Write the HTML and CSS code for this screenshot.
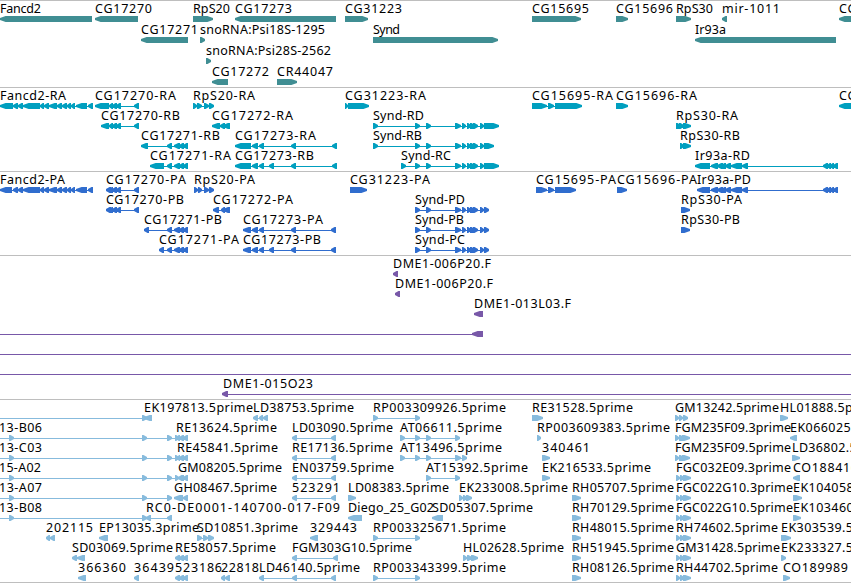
FILE: index.html
```html
<!DOCTYPE html>
<html lang="en">
<head>
    <meta charset="UTF-8">
    <meta name="viewport" content="width=device-width, initial-scale=1.0">
    <title>Genome Tracks</title>
    <link rel="stylesheet" href="styles.css">
</head>
<body>
    <main class="tracks">
        <section class="track genes" id="genes"></section>
        <section class="track transcripts" id="transcripts"></section>
        <section class="track proteins" id="proteins"></section>
        <section class="track clones" id="clones"></section>
        <section class="track ests" id="ests"></section>
    </main>
    <script src="script.js"></script>
</body>
</html>
```

FILE: styles.css
```css
body {
    margin: 0;
    background-color: #ffffff;
    font-family: "Noto Sans", "DejaVu Sans", sans-serif;
    font-size: 12.5px;
    overflow: hidden;
}

.tracks {
    display: flex;
    flex-direction: column;
    width: 851px;
    border-bottom: 1px solid #bebebe;
}

.track {
    box-sizing: border-box;
    border-top: 1px solid #bebebe;
    padding-bottom: 3px;
}

.row {
    display: block;
    width: 851px;
    height: 20px;
    overflow: visible;
}

.label {
    fill: #000000;
}

/* The gene rows are one pixel taller than the others */
.genes .row {
    height: 21px;
}

.genes,
.ests {
    padding-bottom: 2px;
}

.genes {
    color: #408e93;
}

.transcripts {
    color: #009fbf;
}

.proteins {
    color: #306dce;
}

.clones {
    color: #7858a8;
}

.ests {
    color: #87bbdd;
}

.feature {
    fill: currentColor;
}
```

FILE: script.js
```js
// One string per row. Features are separated by ";" and written as
// label | label width | strand | blocks (start-end) | label x (optional)
const fancd2 = '13:18 18:23 23:40 40:44 44:49 49:57 57:62 62:67 67:71 71:75 76:87 88:93';
const synd = '415:420 426:431 455:461 462:466 467:471 470:475 473:478 480:484';
const ir93a = '711:718 717:723 721:726 725:731 731:742 742:748 823:828 827:831 830:834 833:838';
const cg71 = '167:172 174:180 179:184 183:188';
const cg70 = '109:113 112:117 116:121 134:139';
const rps30 = '676:680 680:684 683:691';

const tracks = {
    genes: [
        'Fancd2|41|<|0:92;CG17270|57|<|95:138;RpS20|37|>|193:213;CG17273|57|<|235:336;CG31223|57|>|345:368;CG15695|57|>|532:581;CG15696|57|>|616:628;RpS30|37|>|676:691;mir-1011|58|<|722:727;CG17278|57|<|839:890',
        'CG17271|57|<|141:188;snoRNA:Psi18S-1295|125|>|200:205;Synd|27|>|373:498;Ir93a|31|<|695:836',
        'snoRNA:Psi28S-2562|125|>|206:211',
        'CG17272|57|<|212:228;CR44047|56|>|277:297'
    ],
    transcripts: [
        `Fancd2-RA|66|<|0:13 ${fancd2};CG17270-RA|81|<|95:109 ${cg70};RpS20-RA|62|>|193:197 197:202 204:209 209:214;CG31223-RA|81|>|345:348 348:369;CG15695-RA|81|>|532:547 548:554 555:582;CG15696-RA|81|>|616:628;CG17278-RA|81|<|839:890`,
        `CG17270-RB|79|<|101:109 ${cg70};CG17272-RA|81|<|212:220 220:225 223:230;Synd-RD|51|>|373:378 ${synd} 484:499;RpS30-RA|62|>|676:681 679:684 683:691`,
        `CG17271-RB|79|<|141:148 ${cg71};CG17273-RA|81|<|235:251 252:258 259:264 291:296 332:337;Synd-RB|49|>|373:378 ${synd} 484:494;RpS30-RB|60|>|680:684 683:691`,
        `CG17271-RA|81|<|150:164 ${cg71};CG17273-RB|79|<|235:251 252:258 259:264 269:274 291:296 332:337;Synd-RC|50|>|401:406 ${synd} 484:499;Ir93a-RD|55|<|695:710 ${ir93a}`
    ],
    proteins: [
        `Fancd2-PA|65|<|0:12 ${fancd2};CG17270-PA|80|<|106:111 ${cg70};RpS20-PA|61|>|194:198 198:202 204:209 209:214;CG31223-PA|80|>|350:367;CG15695-PA|80|>|536:547 548:554 555:576;CG15696-PA|80|>|617:627;Ir93a-PD|54|<|697:710 ${ir93a}`,
        `CG17270-PB|78|<|106:111 ${cg70};CG17272-PA|80|<|213:219 221:225 223:230;Synd-PD|50|>|${synd} 484:489;RpS30-PA|61|>|681:690`,
        `CG17271-PB|78|<|144:149 ${cg71};CG17273-PA|80|<|243:251 252:258 259:264 291:296 331:336;Synd-PB|49|>|${synd} 484:489;RpS30-PB|59|>|681:690`,
        `CG17271-PA|80|<|159:164 ${cg71};CG17273-PB|78|<|243:251 252:258 259:264 269:274 291:296 331:336;Synd-PC|50|>|${synd} 484:489`
    ],
    clones: [
        'DME1-006P20.F|98|<|393:398',
        'DME1-006P20.F|98|<|395:400',
        'DME1-013L03.F|97|<|474:483',
        '||<|-40:-30 472:483',
        '||<|-40:-30 890:900',
        '||<|-40:-30 890:900',
        'DME1-015O23|90|<|222:228 890:900|223'
    ],
    ests: [
        '||>|-40:-30 142:147;EK197813.5prime|109|<|144:152;LD38753.5prime|101|<|253:258 259:263 263:268;RP003309926.5prime|133|>|373:378 415:420;RE31528.5prime|101|>|532:543;GM13242.5prime|104|>|675:679 679:683 683:688;HL01888.5prime|101|>|780:788',
        '13-B06|43|>|-40:-30 9:14 142:147 167:172 175:179|-1;RE13624.5prime|101|<|176:180 179:184 183:188;LD03090.5prime|101|<|292:297 331:336;AT06611.5prime|102|>|400:405 415:420 426:431 455:460;RP003609383.5prime|133|>|537:541;FGM235F09.3prime|116|>|675:679 679:684 682:690;EK066025.5prime|109|<|790:797',
        '13-C03|43|>|-40:-30 9:14 142:147 167:172 175:179|-1;RE45841.5prime|101|<|177:180 179:184 183:188;RE17136.5prime|101|<|292:297 331:336;AT13496.5prime|102|>|400:405 415:420 426:431 455:461 462:467;340461|48|>|542:550;FGM235F09.5prime|116|>|675:679 679:684 682:690;LD36802.5prime|101|>|792:800',
        '15-A02|42|>|-40:-30 9:14 142:147 167:172 175:179|-1;GM08205.5prime|104|<|178:183 179:184 183:188;EN03759.5prime|102|<|292:297 331:336;AT15392.5prime|102|>|426:431 455:460;EK216533.5prime|109|>|542:550;FGC032E09.3prime|115|>|' + rps30 + ';CO188416|65|<|793:800',
        '13-A07|43|>|-40:-30 9:14 142:147 167:172|-1;GH08467.5prime|103|<|174:183 183:188;523291|48|<|292:297 331:336;LD08383.5prime|101|>|348:356;EK233008.5prime|109|>|459:463 463:467 466:472;RH05707.5prime|102|>|572:581;FGC022G10.3prime|117|>|' + rps30 + ';EK104058.5prime|109|>|793:802',
        '13-B08|43|>|-40:-30 9:14 142:147|-1;RC0-DE0001-140700-017-F09|194|<|146:151 167:172;Diego_25_G02|86|<|348:362;SD05307.5prime|101|<|432:443;RH70129.5prime|102|>|572:581;FGC022G10.5prime|117|>|' + rps30 + ';EK103460.5prime|109|>|793:801',
        '202115|47|<|46:50 50:55;EP13035.3prime|100|<|99:108;SD10851.3prime|101|>|197:202 203:208 208:214;329443|47|<|310:318;RP003325671.5prime|133|>|373:378 415:420;RH48015.5prime|102|>|572:581;RH74602.5prime|102|>|' + rps30 + ';EK303539.5prime|109|>|781:791',
        'SD03069.5prime|101|<|72:77 77:85;RE58057.5prime|101|<|175:180 179:184 183:188;FGM303G10.5prime|120|<|292:297 333:338;HL02628.5prime|101|>|463:467 467:472 471:478;RH51945.5prime|102|>|572:581;GM31428.5prime|104|>|' + rps30 + ';EK233327.5prime|109|>|781:786',
        '366360|48|<|78:86;36439|40|<|134:139;523186|47|<|175:180 179:184 183:188;22818|38|<|221:225 225:230;LD46140.5prime|101|<|259:264 292:297 331:336;RP003343399.5prime|133|>|373:378 415:420;RH08126.5prime|102|>|572:581;RH44702.5prime|102|>|' + rps30 + ';CO189989|65|>|783:790'
    ]
};

const MIDDLE = 18;
const BASELINE = 12;

// A box with a blunt pointed end; short boxes are only the point
function block(start, end, strand) {
    const size = end - start;
    const head = size > 6 ? Math.min(size, 8) : size;
    const tip = strand === '<' ? start : end;
    const neck = strand === '<' ? start + head : end - head;
    const tail = strand === '<' ? end : start;
    const shoulder = neck + (tip - neck) * 0.3;
    return `M${tail} ${MIDDLE - 3}H${shoulder}L${tip} ${MIDDLE - 1}V${MIDDLE + 1}L${shoulder} ${MIDDLE + 3}H${tail}Z`;
}

function feature(text) {
    const [label, width, strand, list, labelX] = text.split('|');
    const blocks = list.split(' ').map(b => b.split(':').map(Number));
    const first = blocks[0][0];
    const last = blocks[blocks.length - 1][1];
    const shapes = blocks.map(b => block(b[0], b[1], strand)).join('');
    let svg = '';

    if (blocks.length > 1) {
        svg += `<rect class="feature" x="${first + 1}" y="${MIDDLE}" width="${last - first - 2}" height="1"/>`;
    }
    svg += `<path class="feature" d="${shapes}"/>`;
    if (label) {
        svg += `<text class="label" x="${labelX || first}" y="${BASELINE}" textLength="${width}">${label}</text>`;
    }
    return svg;
}

for (const id in tracks) {
    document.getElementById(id).innerHTML = tracks[id]
        .map(row => `<svg class="row">${row.split(';').map(feature).join('')}</svg>`)
        .join('');
}
```
